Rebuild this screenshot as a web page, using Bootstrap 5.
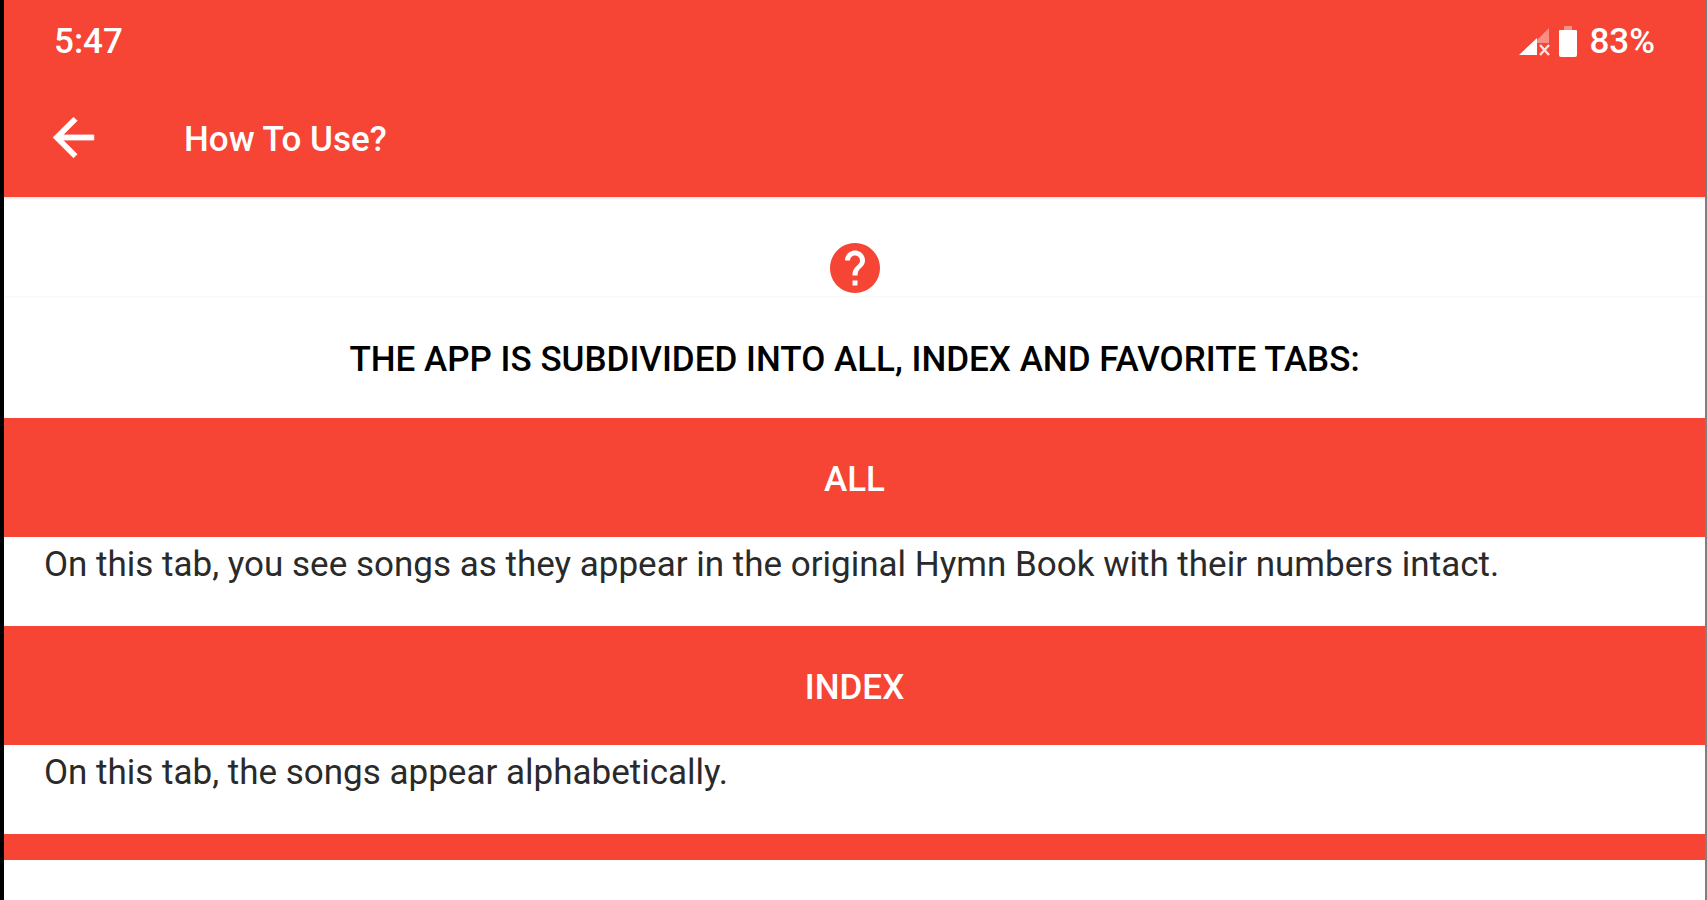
<!DOCTYPE html>
<html lang="en">
<head>
<meta charset="utf-8">
<meta name="viewport" content="width=device-width, initial-scale=1">
<title>How To Use?</title>
<link href="https://cdn.jsdelivr.net/npm/bootstrap@5.3.0/dist/css/bootstrap.min.css" rel="stylesheet">
<style>
  :root { --brand: #f64435; }
  body { font-family: Roboto, "Liberation Sans", sans-serif; font-size: 35px; line-height: 40px; color: #2a2a2a; background: #fff; }
  .screen { border-left: 4px solid #000; border-right: 2px solid rgba(0, 0, 0, .5); background-clip: padding-box; }
  .bg-brand { background: var(--brand); }
  .app-header { box-shadow: 0 1px 3px rgba(0, 0, 0, .15); }
  .status-bar { padding: 22px 50px 0; font-weight: 500; }
  .app-bar { padding: 45px 39px 29px; }
  .app-title { font-size: 35px; line-height: 40px; font-weight: 500; margin-left: 80px; padding-top: 4px; }
  .help-row { padding: 46px 0 3px; border-bottom: 2px solid #fafafa; }
  .intro { padding: 42px 0 38px; font-weight: 500; color: #000; }
  .band { font-size: 35px; line-height: 40px; padding: 42px 0 37px; font-weight: 500; }
  .tab-text { padding: 8px 40px 41px; }
  .band-next { height: 26px; }
</style>
</head>
<body>
<div class="screen min-vh-100">
  <header class="app-header bg-brand text-white">
    <div class="status-bar d-flex justify-content-between align-items-center">
      <span>5:47</span>
      <span class="d-flex align-items-center">
        <svg width="32" height="32" viewBox="0 0 32 32" aria-hidden="true">
          <path d="M18 14 30 2V17H18Z" fill="#fff" opacity=".4"/>
          <path d="M0 29 18 12V29Z" fill="#fff"/>
          <path d="M21 19 30 29M30 19 21 29" stroke="#fff" stroke-width="2.4" opacity=".85"/>
        </svg>
        <svg class="ms-2" width="18" height="34" viewBox="0 0 18 34" aria-hidden="true">
          <path d="M5 1h8v4H5z" fill="#fff" opacity=".4"/>
          <path d="M1 5h16a1 1 0 0 1 1 1v24a2 2 0 0 1-2 2H2a2 2 0 0 1-2-2V6a1 1 0 0 1 1-1z" fill="#fff"/>
        </svg>
        <span class="ms-2 ps-1">83%</span>
      </span>
    </div>
    <div class="app-bar d-flex align-items-center">
      <button type="button" class="btn p-0 border-0 text-white lh-1" aria-label="Back">
        <svg class="d-block" width="61" height="61" viewBox="0 0 24 24" fill="currentColor" stroke="currentColor" stroke-width=".3" aria-hidden="true"><path d="M20 11H7.83l5.59-5.59L12 4l-8 8 8 8 1.41-1.41L7.83 13H20v-2z"/></svg>
      </button>
      <h1 class="app-title mb-0">How To Use?</h1>
    </div>
  </header>

  <main>
    <div class="help-row text-center">
      <svg class="d-block mx-auto" width="50" height="50" viewBox="2 2 20 20" aria-hidden="true"><path fill="#f64435" d="M12 2C6.48 2 2 6.48 2 12s4.480 10 10 10 10-4.480 10-10S17.520 2 12 2zm1 17h-2v-2h2v2zm2.070-7.750l-.9.920C13.450 12.900 13 13.500 13 15h-2v-.5c0-1.100.45-2.100 1.170-2.830l1.240-1.260c.370-.36.590-.86.590-1.410 0-1.100-.9-2-2-2s-2 .9-2 2H8c0-2.210 1.790-4 4-4s4 1.790 4 4c0 .88-.36 1.680-.93 2.250z"/></svg>
    </div>
    <p class="intro text-center mb-0">THE APP IS SUBDIVIDED INTO ALL, INDEX AND FAVORITE TABS:</p>

    <section>
      <h2 class="band bg-brand text-white text-center mb-0">ALL</h2>
      <p class="tab-text mb-0">On this tab, you see songs as they appear in the original Hymn Book with their numbers intact.</p>
    </section>
    <section>
      <h2 class="band bg-brand text-white text-center mb-0">INDEX</h2>
      <p class="tab-text mb-0">On this tab, the songs appear alphabetically.</p>
    </section>
    <div class="band-next bg-brand"></div>
  </main>
</div>
<script src="https://cdn.jsdelivr.net/npm/bootstrap@5.3.0/dist/js/bootstrap.bundle.min.js"></script>
</body>
</html>
